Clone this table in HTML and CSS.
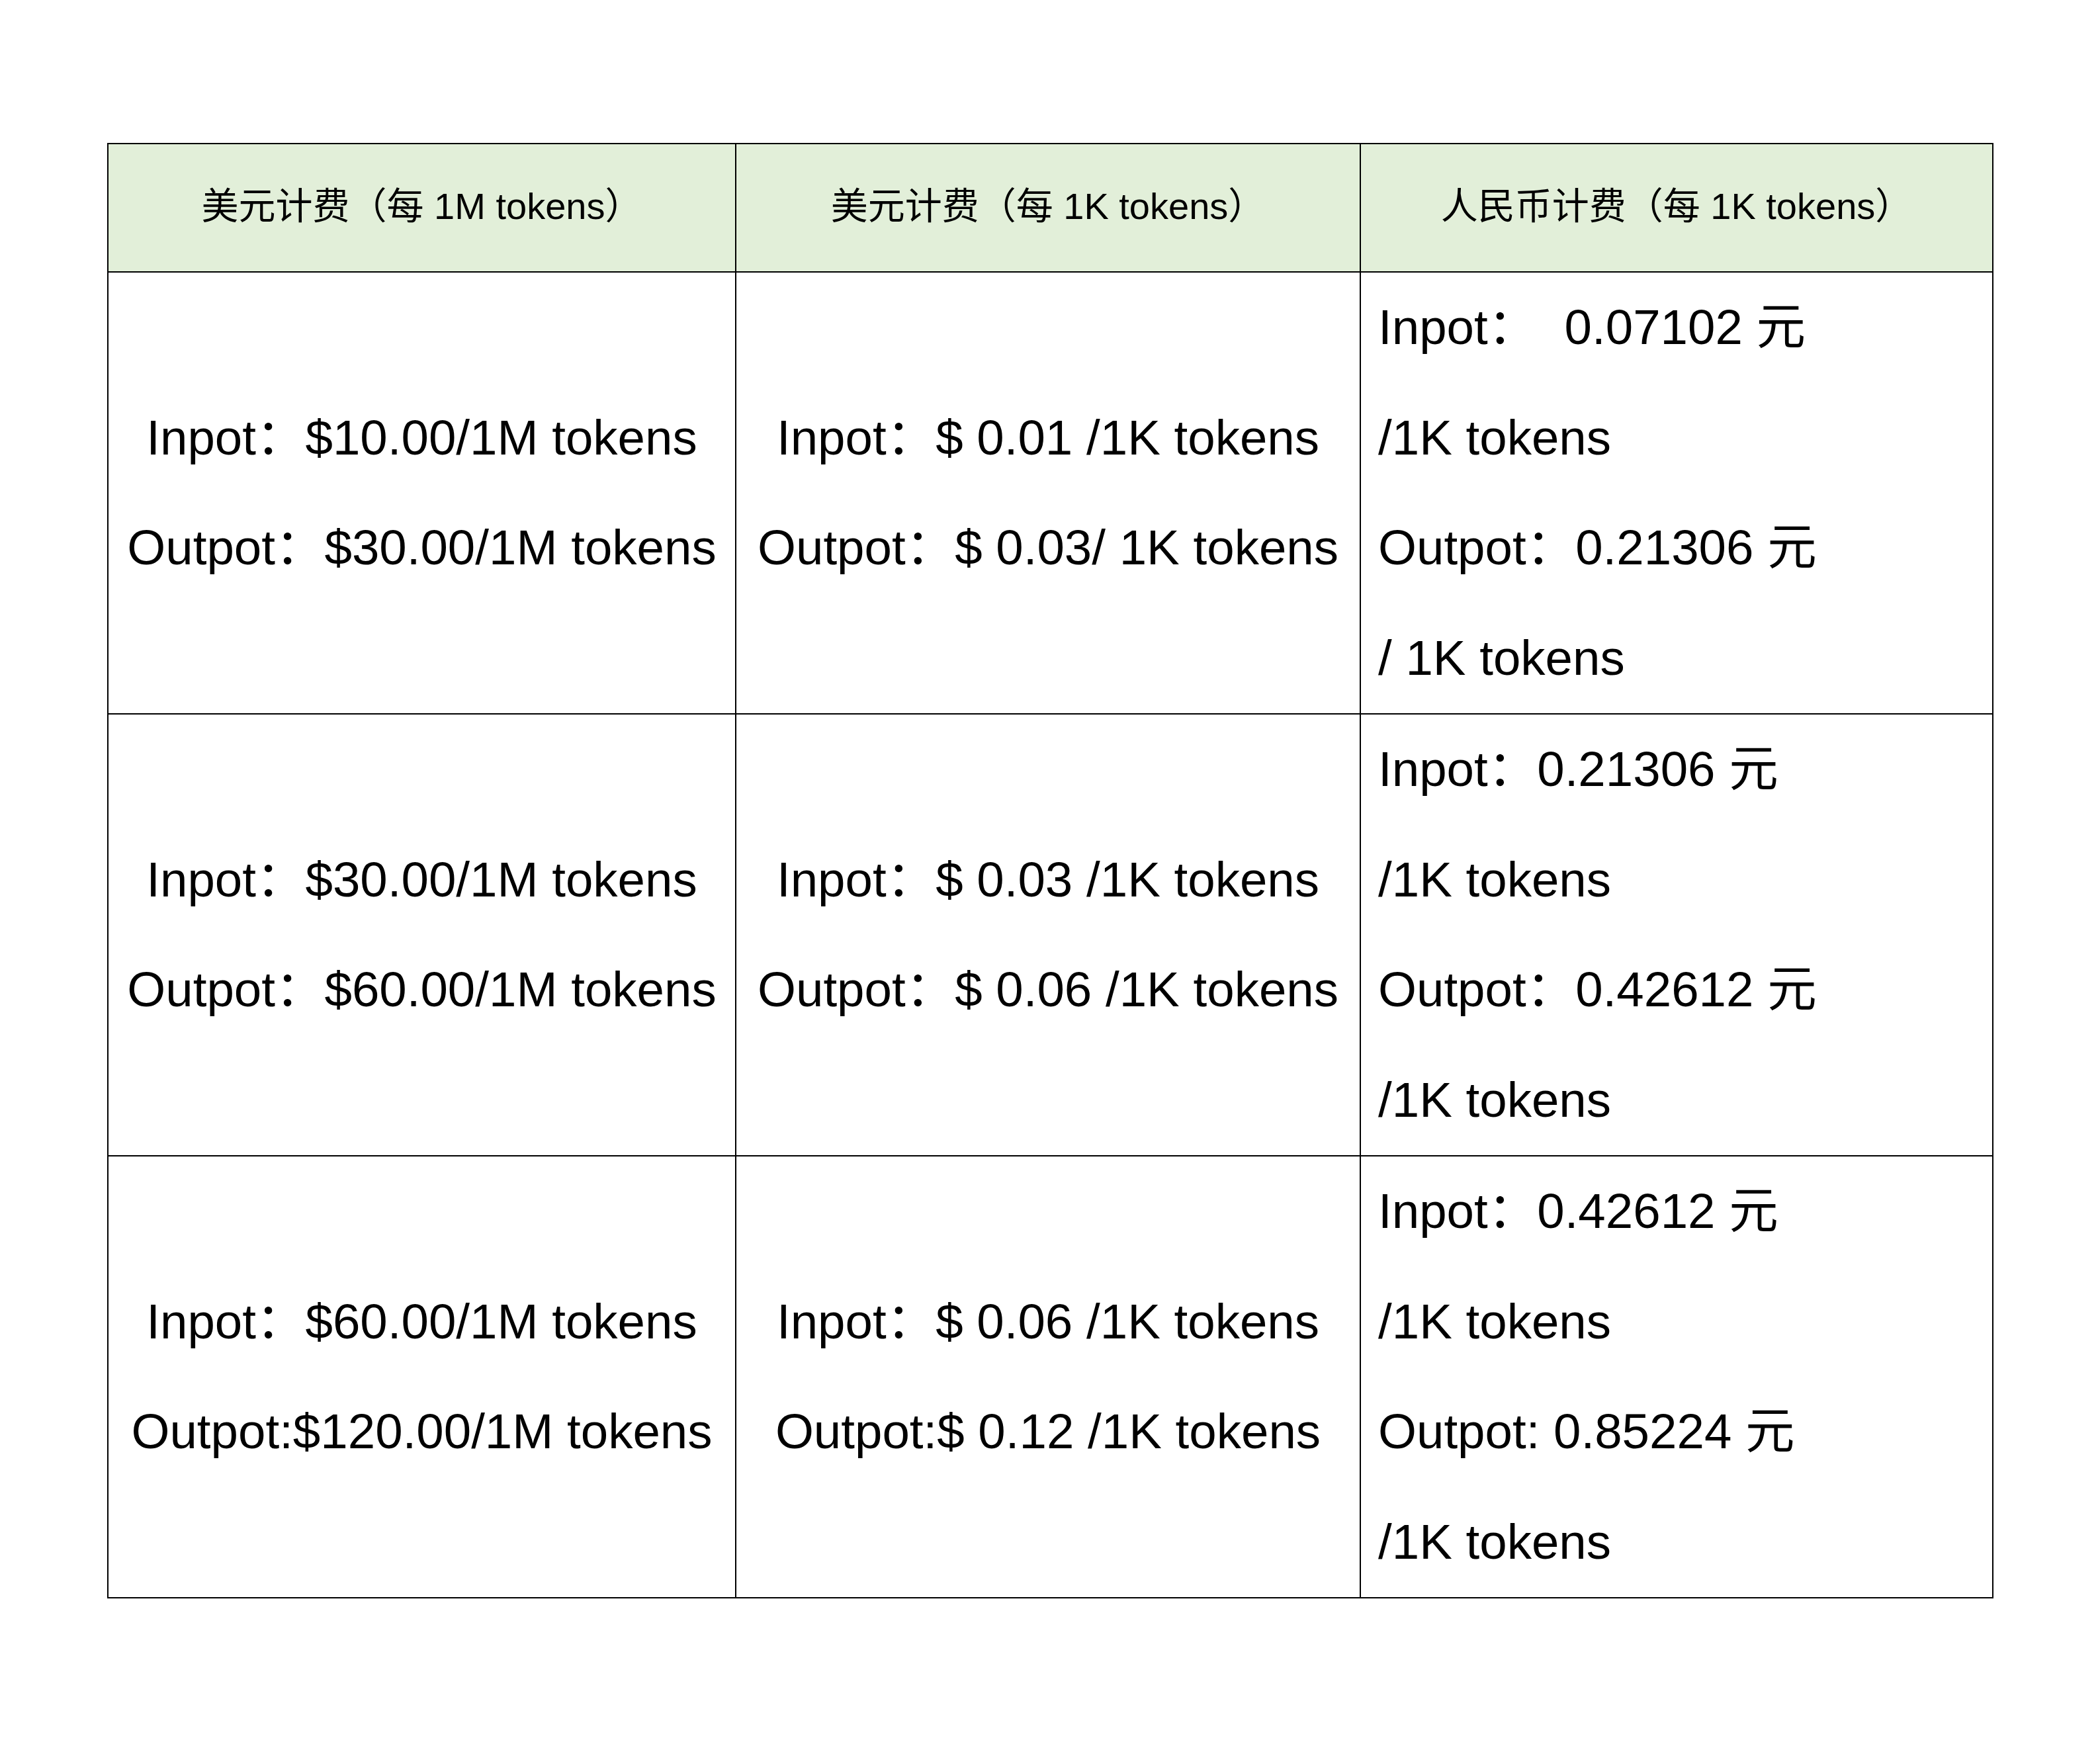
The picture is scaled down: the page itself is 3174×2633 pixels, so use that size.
FILE: index.html
```html
<!DOCTYPE html>
<html lang="zh-CN">
<head>
<meta charset="utf-8">
<title>计费表</title>
<link rel="stylesheet" href="styles.css">
</head>
<body>
<div class="page">
  <table class="price-table">
    <colgroup>
      <col class="c1">
      <col class="c2">
      <col class="c3">
    </colgroup>
    <thead>
      <tr>
        <th>美元计费（每 1M tokens）</th>
        <th>美元计费（每 1K tokens）</th>
        <th>人民币计费（每 1K tokens）</th>
      </tr>
    </thead>
    <tbody>
      <tr>
        <td class="center">Inpot：$10.00/1M tokens<br>Outpot：$30.00/1M tokens</td>
        <td class="center">Inpot：$ 0.01 /1K tokens<br>Outpot：$ 0.03/ 1K tokens</td>
        <td class="left">Inpot：&nbsp; 0.07102 元<br>/1K tokens<br>Outpot：0.21306 元<br>/ 1K tokens</td>
      </tr>
      <tr>
        <td class="center">Inpot：$30.00/1M tokens<br>Outpot：$60.00/1M tokens</td>
        <td class="center">Inpot：$ 0.03 /1K tokens<br>Outpot：$ 0.06 /1K tokens</td>
        <td class="left">Inpot：0.21306 元<br>/1K tokens<br>Outpot：0.42612 元<br>/1K tokens</td>
      </tr>
      <tr>
        <td class="center">Inpot：$60.00/1M tokens<br>Outpot:$120.00/1M tokens</td>
        <td class="center">Inpot：$ 0.06 /1K tokens<br>Outpot:$ 0.12 /1K tokens</td>
        <td class="left">Inpot：0.42612 元<br>/1K tokens<br>Outpot: 0.85224 元<br>/1K tokens</td>
      </tr>
    </tbody>
  </table>
</div>
</body>
</html>
```

FILE: styles.css
```css
html, body {
  margin: 0;
  padding: 0;
  background: #ffffff;
}

.page {
  padding: 216px 0 0 162px;
}

.price-table {
  border-collapse: collapse;
  table-layout: fixed;
  width: 2849px;
  font-family: "Liberation Sans", "Noto Sans CJK SC", sans-serif;
  color: #000000;
}

.c1 { width: 949px; }
.c2 { width: 944px; }
.c3 { width: 956px; }

.price-table th,
.price-table td {
  border: 2px solid #000000;
  padding: 0;
  vertical-align: middle;
}

.price-table th {
  height: 188px;
  padding-bottom: 4px;
  background: #e2efd9;
  font-size: 56px;
  font-weight: normal;
  text-align: center;
  line-height: 64px;
}

.price-table td {
  height: 666px;
  font-size: 74.5px;
  line-height: 166.5px;
  white-space: nowrap;
}

.price-table td.center {
  text-align: center;
}

.price-table td.left {
  text-align: left;
  padding-left: 26px;
}
```
